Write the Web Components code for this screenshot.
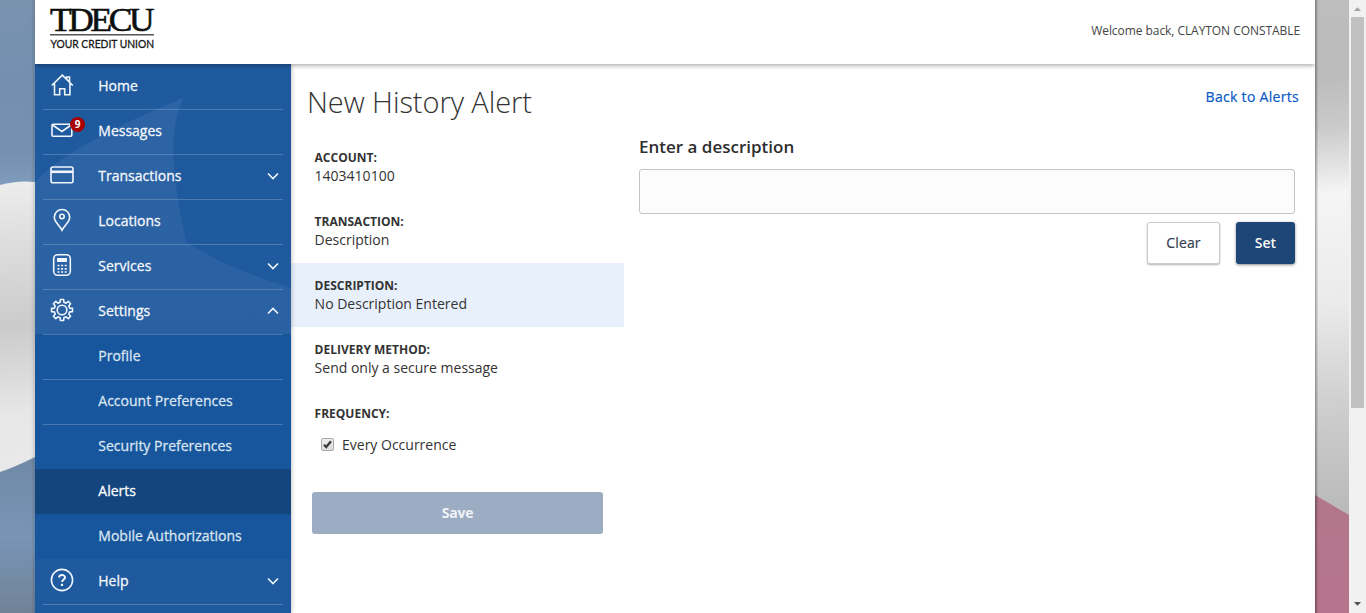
<!DOCTYPE html>
<html lang="en">
<head>
<meta charset="utf-8">
<title>New History Alert</title>
<style>
html,body{margin:0;height:100%;overflow:hidden;background:#fff;font-family:"Open Sans","Noto Sans",sans-serif;font-size:14px;color:#333}
</style>
</head>
<body>
<bank-app></bank-app>
<script>
function define(name, html, setup){
  const t=document.createElement('template');
  t.innerHTML=html;
  customElements.define(name, class extends HTMLElement{
    constructor(){super();this.attachShadow({mode:'open'}).appendChild(t.content.cloneNode(true));}
    connectedCallback(){if(setup)setup(this,this.shadowRoot);}
  });
}

const icons={
home:'<path d="M1.700 12.500 12.300 2.200l10.500 10.300M4.500 10.500v11.300h5.200v-6h5v6h5.200V10.500M16.500 5.800V4h3v4.800"/>',
mail:'<rect x="2" y="6.200" width="19.800" height="12" rx="1"/><path d="M2.600 7l9.300 6.500L21.200 7"/>',
card:'<rect x="1" y="4" width="22" height="15.800" rx="2"/><path d="M1 8.800h22" stroke-width="2.600"/>',
pin:'<path d="M12 22.200C9.500 17.200 4.300 14 4.300 9.200a7.700 7.700 0 0 1 15.400 0c0 4.800-5.200 8-7.700 13z"/><circle cx="12" cy="8.500" r="2.200"/>',
calc:'<rect x="3.700" y="1.700" width="16.600" height="20.600" rx="4"/><path d="M7 7h10" stroke-width="4"/><path d="M7.500 12.500h9.500M7.500 15.800h9.500M7.500 19h9.500" stroke-width="1.700" stroke-dasharray="2 1.600"/>',
gear:'<circle cx="12" cy="12" r="4.800"/><path id="g" stroke-linejoin="round"/>',
help:'<circle cx="12" cy="12" r="10.600"/><path d="M9.100 9.500C9.200 6.300 15 6.300 15 9.500c0 2-2.800 2.200-2.900 4.500" stroke-width="2"/><path d="M12 15.800v2.200" stroke-width="2.200"/>'
};
function gearPath(){
  const pts=[];
  for(let i=0;i<8;i++){
    for(const [a,r] of [[-14,7.900],[-9,10.600],[9,10.600],[14,7.900]]){
      const th=(i*45+a)*Math.PI/180;
      pts.push((12+r*Math.sin(th)).toFixed(2)+' '+(12-r*Math.cos(th)).toFixed(2));
    }
  }
  return 'M'+pts.join('L')+'Z';
}

define('nav-item',`
<style>
:host{display:block;height:45px;box-sizing:border-box;padding:0 8px;color:#f5f8fc}
:host([sub]){background:#17569c;color:#dbe5f1}
:host([current]){background:#13467d;color:#fff}
.row{display:flex;align-items:center;height:44px;border-top:1px solid rgba(150,180,214,.38)}
:host([plain]) .row{border-color:transparent}
.ico{width:24px;height:24px;margin-left:7px;margin-right:24px;margin-bottom:4px;position:relative}
svg{display:block;fill:none;stroke:#f1f6fc;stroke-width:1.600}
.label{flex:1;font-size:14px;line-height:20px;margin-bottom:2px;padding-left:.3px;white-space:nowrap;-webkit-text-stroke:.28px currentColor}
.chev{width:12px;height:8px;margin:0 3.600px 2px 0}
.badge{position:absolute;left:20px;top:-1px;width:15px;height:15px;border-radius:50%;background:#a80000;color:#fff;font-size:10px;font-weight:700;line-height:15px;text-align:center}
</style>
<div class="row"><div class="ico"></div><div class="label"><slot></slot></div></div>`,
(el,r)=>{
  const i=el.getAttribute('icon'), box=r.querySelector('.ico');
  if(i){
    box.innerHTML='<svg width="24" height="24" viewBox="0 0 24 24">'+icons[i]+'</svg>';
    const g=box.querySelector('#g'); if(g)g.setAttribute('d',gearPath());
  }
  if(el.hasAttribute('count')){
    const b=document.createElement('div');b.className='badge';b.textContent=el.getAttribute('count');box.appendChild(b);
  }
  const c=el.getAttribute('chevron');
  if(c)r.querySelector('.row').insertAdjacentHTML('beforeend','<svg class="chev" viewBox="0 0 12 8"><path d="'+(c==='up'?'M1 6.500 6 1.500l5 5':'M1 1.500l5 5 5-5')+'"/></svg>');
});

define('side-nav',`
<style>
:host{display:block;width:256px;flex:none;height:549px;overflow:hidden;background:#205a9e;position:relative;box-shadow:0 0 5px rgba(0,0,0,.3)}
.deco{position:absolute;left:0;top:0;display:block}
nav{position:relative}
</style>
<svg class="deco" width="256" height="549">
<defs><linearGradient id="l" x1="0" y1="0" x2="0" y2="1"><stop offset="0" stop-color="#2c64a5"/><stop offset="1" stop-color="#2a61a2"/></linearGradient></defs>
<path d="M0 118C25 91 80 62 148 34 132 70 138 115 151 178 185 200 220 213 256 224V270H0Z" fill="url(#l)"/>
</svg>
<nav>
<nav-item icon="home" plain>Home</nav-item>
<nav-item icon="mail" count="9">Messages</nav-item>
<nav-item icon="card" chevron="down">Transactions</nav-item>
<nav-item icon="pin">Locations</nav-item>
<nav-item icon="calc" chevron="down">Services</nav-item>
<nav-item icon="gear" chevron="up">Settings</nav-item>
<nav-item sub>Profile</nav-item>
<nav-item sub>Account Preferences</nav-item>
<nav-item sub>Security Preferences</nav-item>
<nav-item sub current plain>Alerts</nav-item>
<nav-item sub plain>Mobile Authorizations</nav-item>
<nav-item icon="help" chevron="down" plain>Help</nav-item>
<nav-item></nav-item>
</nav>`);

define('bank-logo',`
<style>:host{display:block;width:116px;height:54px}svg{display:block;overflow:visible}</style>
<svg width="116" height="54">
<text transform="translate(0 26.500) scale(1.058 1)" font-family="Liberation Serif,serif" font-size="33.500" letter-spacing="-3.200" fill="#0b0f0e" stroke="#0b0f0e" stroke-width=".6">TDECU</text>
<path d="M0 30.700h104" stroke="#555" stroke-width="1.500"/>
<text x="0.500" y="43.500" font-family="Lato,sans-serif" font-size="11.500" textLength="103.500" lengthAdjust="spacingAndGlyphs" fill="#161616" stroke="#161616" stroke-width=".3">YOUR CREDIT UNION</text>
</svg>`);

define('app-header',`
<style>
:host{display:flex;justify-content:space-between;height:64px;background:#fff;box-shadow:0 1px 5px rgba(0,0,0,.4);position:relative;z-index:2}
bank-logo{margin:4px 0 0 15px}
.hi{margin:22px 15px 0 0;font-size:12px;line-height:17px;letter-spacing:-.06px;white-space:nowrap;color:#444}
</style>
<bank-logo></bank-logo><div class="hi">Welcome back, CLAYTON CONSTABLE</div>`);

define('alert-field',`
<style>
:host{display:block;box-sizing:border-box;height:64px;padding:13px 23px 0 23.600px;color:#333}
:host([selected]){background:#e8f0fc}
b{display:block;font-size:12px;line-height:19px;font-weight:700;text-transform:uppercase}
div{font-size:14px;line-height:18px;white-space:nowrap}
</style><b></b><div><slot></slot></div>`,
(el,r)=>{r.querySelector('b').textContent=el.getAttribute('label');});

define('check-box',`
<style>
:host{display:flex;align-items:center;font-size:14px;line-height:20px}
svg{display:block;margin:0 8px 2px 0}
</style>
<svg width="13" height="13" viewBox="0 0 13 13"><defs><linearGradient id="f" x1="0" y1="0" x2="0" y2="1"><stop offset="0" stop-color="#eee"/><stop offset="1" stop-color="#dcdcdc"/></linearGradient></defs><rect x=".5" y=".5" width="12" height="12" rx="1.500" fill="url(#f)" stroke="#aaa"/><path d="M3 6.800 5.200 9 10 3.200" fill="none" stroke="#3b3b3b" stroke-width="2.300"/></svg>
<span><slot></slot></span>`);

define('ui-button',`
<style>
:host{display:flex;align-items:center;justify-content:center;box-sizing:border-box;height:42px;padding-bottom:2px;border-radius:3px;font-size:14px;font-weight:600;color:#f8f8f8;background:#1d4677;box-shadow:0 1px 3px rgba(0,0,0,.45)}
:host([kind=light]){background:#fff;color:#333f50;border:1px solid #ccc;font-weight:400;box-shadow:0 1px 2px rgba(0,0,0,.3);-webkit-text-stroke:.2px currentColor;letter-spacing:.15px}
:host([kind=off]){background:#9bacc3;color:#f0f3f7;box-shadow:none;font-weight:700;letter-spacing:-.2px}
</style><slot></slot>`);

define('alert-form',`
<style>
:host{display:block;flex:1;background:#fff}
.top{display:flex;justify-content:space-between;height:72px;padding:0 16px}
h1{margin:17px 0 0;font-size:29px;line-height:42px;font-weight:300;letter-spacing:-.06px;color:#333;white-space:nowrap}
a{margin-top:23px;font-size:14px;line-height:20px;letter-spacing:.3px;-webkit-text-stroke:.2px currentColor;color:#0a58c8;white-space:nowrap}
.cols{display:flex}
.left{width:333px;margin-top:-1px}
.right{margin:0 20px 0 15px;flex:1}
h2{margin:0;font-size:17px;line-height:22px;font-weight:600;color:#2e2e2e}
.input{box-sizing:border-box;height:45px;margin-top:11px;border:1px solid #c4c4c4;border-radius:3px;background:#fcfcfc}
.acts{display:flex;justify-content:flex-end;margin-top:8px;gap:16px}
.clear{width:73px}
.set{width:59px}
.freq{height:44px}
check-box{margin-left:30px}
.save{margin:37px 21px 0}
</style>
<div class="top"><h1>New History Alert</h1><a>Back to Alerts</a></div>
<div class="cols">
<div class="left">
<alert-field label="Account:">1403410100</alert-field>
<alert-field label="Transaction:">Description</alert-field>
<alert-field label="Description:" selected>No Description Entered</alert-field>
<alert-field label="Delivery Method:">Send only a secure message</alert-field>
<alert-field class="freq" label="Frequency:"></alert-field>
<check-box>Every Occurrence</check-box>
<ui-button class="save" kind="off">Save</ui-button>
</div>
<div class="right"><h2>Enter a description</h2><div class="input"></div>
<div class="acts"><ui-button kind="light" class="clear">Clear</ui-button><ui-button class="set">Set</ui-button></div></div>
</div>`);

define('scroll-bar',`
<style>
:host{display:flex;flex-direction:column;align-items:center;width:17px;height:613px;background:#f1f1f1}
svg{display:block;flex:none}
.thumb{width:13px;height:391px;background:#c1c1c1}
.gap{flex:1}
</style>
<svg width="17" height="17"><path d="M5 11h7L8.500 7.200z" fill="#a3a3a3"/></svg>
<div class="thumb"></div><div class="gap"></div>
<svg width="17" height="17"><path d="M5 6h7L8.500 9.800z" fill="#505050"/></svg>`);

define('flag-strip',`
<style>:host{display:block;height:613px}svg{display:block}</style>
<svg class="west" width="35" height="613"><defs>
<linearGradient id="a" x1="0" y1="0" x2="0" y2="1"><stop offset="0" stop-color="#7992ae"/><stop offset=".45" stop-color="#7390b1"/><stop offset=".8" stop-color="#7491b1"/><stop offset="1" stop-color="#809dbd"/></linearGradient>
<linearGradient id="b" gradientUnits="userSpaceOnUse" x1="0" y1="182" x2="20" y2="472"><stop offset="0" stop-color="#ededed"/><stop offset=".2" stop-color="#dedede"/><stop offset=".5" stop-color="#cbcbcb"/><stop offset=".8" stop-color="#e7e7e7"/><stop offset="1" stop-color="#e9e9e9"/></linearGradient>
<linearGradient id="c" x1="0" y1="0" x2="0" y2="1"><stop offset="0" stop-color="#7089a5"/><stop offset=".5" stop-color="#7895b7"/><stop offset="1" stop-color="#718297"/></linearGradient>
<linearGradient id="s" x1="0" y1="0" x2="1" y2="0"><stop offset=".88" stop-opacity="0"/><stop offset="1" stop-opacity=".12"/></linearGradient></defs>
<rect width="35" height="190" fill="url(#a)"/>
<path d="M0 185Q18 180 35 182V457Q15 467 0 472Z" fill="url(#b)"/>
<path d="M0 472Q15 467 35 457V613H0Z" fill="url(#c)"/>
<rect width="35" height="613" fill="url(#s)"/></svg>
<svg class="east" width="34" height="613"><defs>
<linearGradient id="d" gradientUnits="userSpaceOnUse" x1="0" y1="0" x2="40" y2="510"><stop offset="0" stop-color="#bdbdbd"/><stop offset=".15" stop-color="#bcbcbc"/><stop offset=".25" stop-color="#cacaca"/><stop offset=".38" stop-color="#f5f5f5"/><stop offset=".6" stop-color="#eaeaea"/><stop offset=".78" stop-color="#d0d0d0"/><stop offset="1" stop-color="#b9b9b9"/></linearGradient>
<linearGradient id="e" x1="0" y1="0" x2="0" y2="1"><stop offset="0" stop-color="#b1778b"/><stop offset="1" stop-color="#b7748d"/></linearGradient>
<linearGradient id="t" x1="0" y1="0" x2="1" y2="0"><stop offset="0" stop-opacity=".35"/><stop offset=".1" stop-opacity="0"/></linearGradient></defs>
<rect width="34" height="520" fill="url(#d)"/><path d="M0 495 34 515V613H0Z" fill="url(#e)"/><rect width="34" height="613" fill="url(#t)"/></svg>`,
(el,r)=>{r.querySelector(el.hasAttribute('east')?'.west':'.east').remove();});

define('bank-app',`
<style>
:host{display:flex;width:1366px;height:613px;overflow:hidden}
main{width:1280px;height:613px;overflow:hidden}
.body{display:flex;height:549px}
</style>
<flag-strip></flag-strip>
<main><app-header></app-header><div class="body"><side-nav></side-nav><alert-form></alert-form></div></main>
<flag-strip east></flag-strip><scroll-bar></scroll-bar>`);
</script>
</body>
</html>
